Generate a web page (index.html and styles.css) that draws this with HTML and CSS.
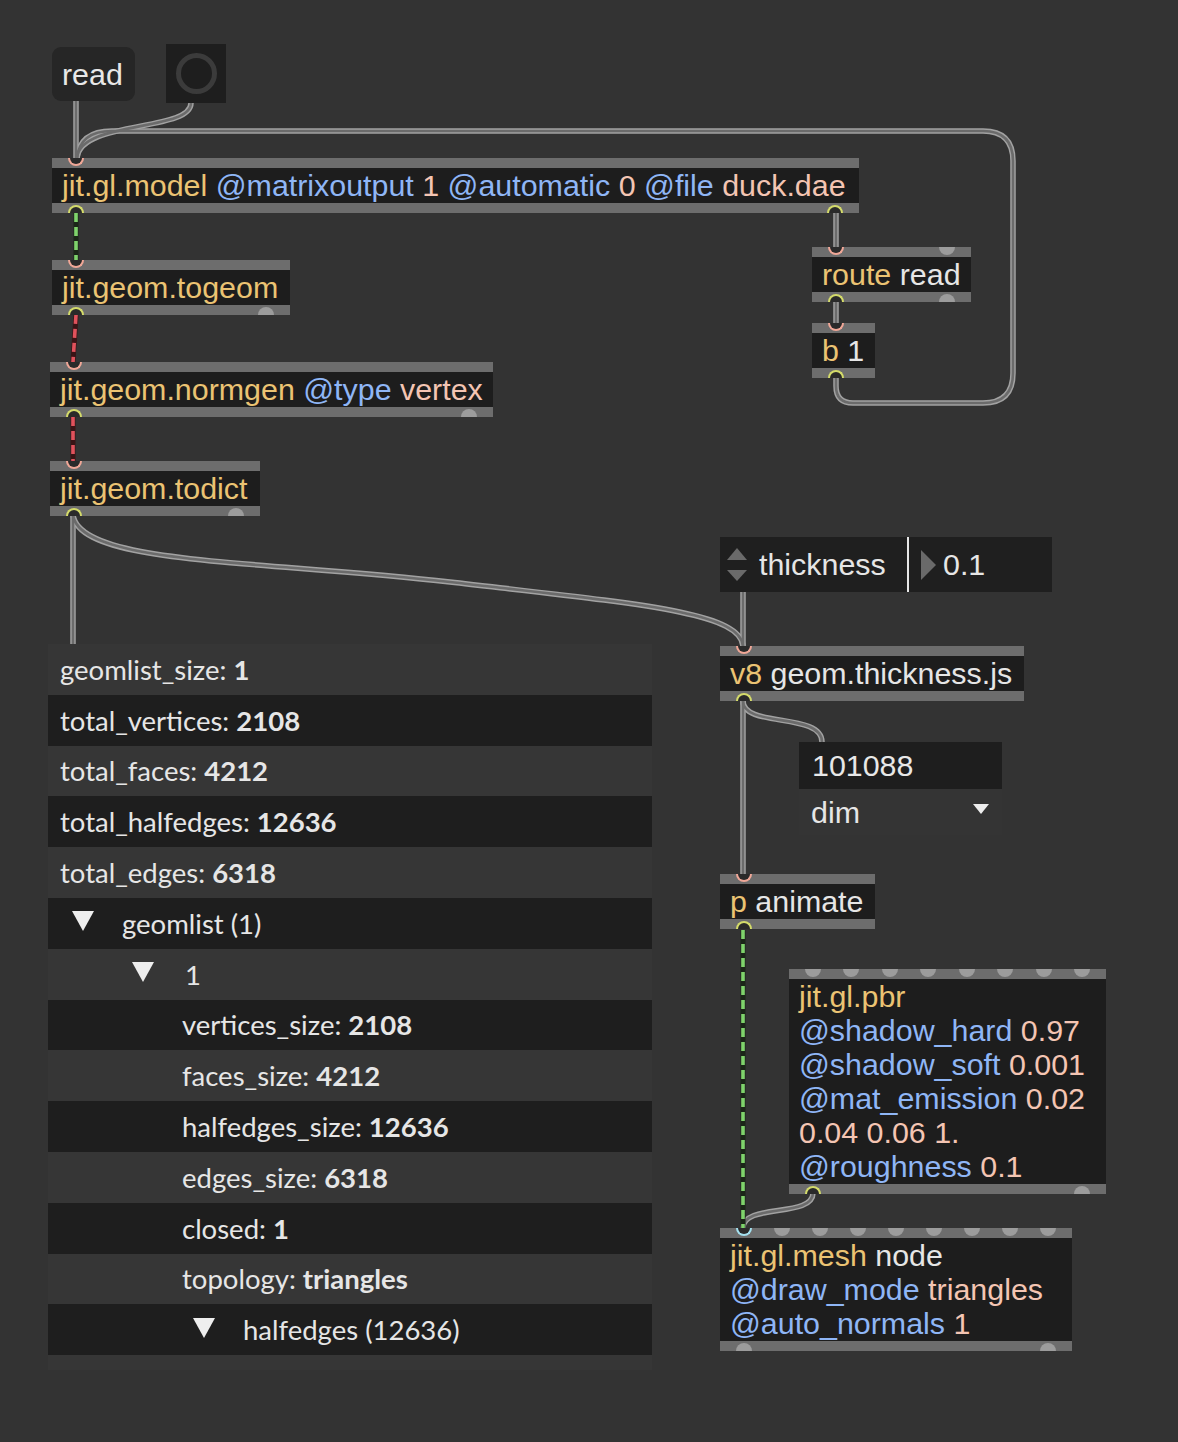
FILE: index.html
```html
<!DOCTYPE html>
<html>
<head>
<meta charset="utf-8">
<link rel="stylesheet" href="styles.css">
</head>
<body>
<div class="patcher">
  <svg class="cords" width="1178" height="1442" viewBox="0 0 1178 1442">
    <defs>
      <path id="c1" d="M76,101 L76,158"/>
      <path id="c2" d="M191,103 C191,132 80,120 77,158"/>
      <path id="c3" d="M836,378 L836,386 Q836,403 853,403 L983,403 Q1013,403 1013,373 L1013,161 Q1013,131 983,131 L112,131 Q80,131 77,158"/>
      <path id="c4" d="M836,213 L836,247"/>
      <path id="c5" d="M836,302 L836,323"/>
      <path id="c6" d="M73,515 L73,644"/>
      <path id="c7" d="M73,515 C80,565 260,560 450,582 C640,604 740,612 743,646"/>
      <path id="c8" d="M743,592 L743,646"/>
      <path id="c9" d="M743,701 C743,728 822,712 822,742"/>
      <path id="c10" d="M743,701 L743,874"/>
      <path id="c11" d="M813,1193 C813,1218 743,1203 743,1228"/>
      <path id="g1" d="M76,213 L76,260"/>
      <path id="g2" d="M743,930 L743,1228"/>
      <path id="r1" d="M76,315 L73,362"/>
      <path id="r2" d="M73,417 L73,461"/>
    </defs>
    <g class="cord-outer">
      <use href="#c1"/><use href="#c2"/><use href="#c3"/><use href="#c4"/><use href="#c5"/><use href="#c6"/>
      <use href="#c7"/><use href="#c8"/><use href="#c9"/><use href="#c10"/><use href="#c11"/>
    </g>
    <g class="cord-inner">
      <use href="#c1"/><use href="#c2"/><use href="#c3"/><use href="#c4"/><use href="#c5"/><use href="#c6"/>
      <use href="#c7"/><use href="#c8"/><use href="#c9"/><use href="#c10"/><use href="#c11"/>
    </g>
    <g class="green-under"><use href="#g1"/><use href="#g2"/></g>
    <g class="green-dash"><use href="#g1"/><use href="#g2"/></g>
    <g class="red-under"><use href="#r1"/><use href="#r2"/></g>
    <g class="red-dash"><use href="#r1"/><use href="#r2"/></g>
  </svg>

  <div class="node msg n-read">read</div>
  <div class="node bang n-bang"><div class="ring"></div></div>

  <div class="node obj n-model">
    <div class="bar top"><span class="port in"></span></div>
    <div class="body"><span class="cls">jit.gl.model</span> <span class="attr">@matrixoutput</span> <span class="val">1</span> <span class="attr">@automatic</span> <span class="val">0</span> <span class="attr">@file</span> <span class="val">duck.dae</span></div>
    <div class="bar bot"><span class="port out"></span><span class="port out"></span></div>
  </div>

  <div class="node obj n-togeom">
    <div class="bar top"><span class="port in"></span></div>
    <div class="body"><span class="cls">jit.geom.togeom</span></div>
    <div class="bar bot"><span class="port out"></span><span class="port bump"></span></div>
  </div>

  <div class="node obj n-normgen">
    <div class="bar top"><span class="port in"></span></div>
    <div class="body"><span class="cls">jit.geom.normgen</span> <span class="attr">@type</span> <span class="val">vertex</span></div>
    <div class="bar bot"><span class="port out"></span><span class="port bump"></span></div>
  </div>

  <div class="node obj n-todict">
    <div class="bar top"><span class="port in"></span></div>
    <div class="body"><span class="cls">jit.geom.todict</span></div>
    <div class="bar bot"><span class="port out"></span><span class="port bump"></span></div>
  </div>

  <div class="node obj n-route">
    <div class="bar top"><span class="port in"></span><span class="port bump"></span></div>
    <div class="body"><span class="cls">route</span> read</div>
    <div class="bar bot"><span class="port out"></span><span class="port bump"></span></div>
  </div>

  <div class="node obj n-b1">
    <div class="bar top"><span class="port in"></span></div>
    <div class="body"><span class="cls">b</span> 1</div>
    <div class="bar bot"><span class="port out"></span></div>
  </div>

  <div class="node attrui n-attr">
    <div class="arrows"><span class="up"></span><span class="down"></span></div>
    <div class="label">thickness</div>
    <div class="sep"></div>
    <span class="play"></span>
    <div class="value">0.1</div>
  </div>

  <div class="node obj n-v8">
    <div class="bar top"><span class="port in"></span></div>
    <div class="body"><span class="cls">v8</span> geom.thickness.js</div>
    <div class="bar bot"><span class="port out"></span></div>
  </div>

  <div class="node numbox n-num">101088</div>
  <div class="node umenu n-menu"><span>dim</span><span class="drop"></span></div>

  <div class="node obj n-anim">
    <div class="bar top"><span class="port in"></span></div>
    <div class="body"><span class="cls">p</span> animate</div>
    <div class="bar bot"><span class="port out"></span></div>
  </div>

  <div class="node obj n-pbr">
    <div class="bar top">
      <span class="port bump"></span><span class="port bump"></span><span class="port bump"></span><span class="port bump"></span>
      <span class="port bump"></span><span class="port bump"></span><span class="port bump"></span><span class="port bump"></span>
    </div>
    <div class="body multi">
      <div><span class="cls">jit.gl.pbr</span></div>
      <div><span class="attr">@shadow_hard</span> <span class="val">0.97</span></div>
      <div><span class="attr">@shadow_soft</span> <span class="val">0.001</span></div>
      <div><span class="attr">@mat_emission</span> <span class="val">0.02</span></div>
      <div><span class="val">0.04 0.06 1.</span></div>
      <div><span class="attr">@roughness</span> <span class="val">0.1</span></div>
    </div>
    <div class="bar bot"><span class="port out"></span><span class="port bump"></span></div>
  </div>

  <div class="node obj n-mesh">
    <div class="bar top">
      <span class="port in-blue"></span>
      <span class="port bump"></span><span class="port bump"></span><span class="port bump"></span><span class="port bump"></span>
      <span class="port bump"></span><span class="port bump"></span><span class="port bump"></span><span class="port bump"></span>
    </div>
    <div class="body multi">
      <div><span class="cls">jit.gl.mesh</span> node</div>
      <div><span class="attr">@draw_mode</span> <span class="val">triangles</span></div>
      <div><span class="attr">@auto_normals</span> <span class="val">1</span></div>
    </div>
    <div class="bar bot"><span class="port bump"></span><span class="port bump"></span></div>
  </div>

  <div class="node dict n-dict">
    <div class="row l0">geomlist_size:&nbsp;<b>1</b></div>
    <div class="row l0">total_vertices:&nbsp;<b>2108</b></div>
    <div class="row l0">total_faces:&nbsp;<b>4212</b></div>
    <div class="row l0">total_halfedges:&nbsp;<b>12636</b></div>
    <div class="row l0">total_edges:&nbsp;<b>6318</b></div>
    <div class="row t0"><span class="tri"></span>geomlist (1)</div>
    <div class="row t1"><span class="tri"></span>1</div>
    <div class="row l2">vertices_size:&nbsp;<b>2108</b></div>
    <div class="row l2">faces_size:&nbsp;<b>4212</b></div>
    <div class="row l2">halfedges_size:&nbsp;<b>12636</b></div>
    <div class="row l2">edges_size:&nbsp;<b>6318</b></div>
    <div class="row l2">closed:&nbsp;<b>1</b></div>
    <div class="row l2">topology:&nbsp;<b>triangles</b></div>
    <div class="row t2"><span class="tri"></span>halfedges (12636)</div>
  </div>
</div>
</body>
</html>
```

FILE: styles.css
```css
html, body {
  margin: 0;
  padding: 0;
  background: #333333;
}

.patcher {
  position: relative;
  width: 1178px;
  height: 1442px;
  overflow: hidden;
  background: #333333;
  font-family: "Liberation Sans", Arial, sans-serif;
  color: #e6e6e6;
}

.cords {
  position: absolute;
  left: 0;
  top: 0;
  z-index: 0;
}

.cords use { fill: none; }
.cord-outer use { stroke: #a2a2a2; stroke-width: 5.5; fill: none; }
.cord-inner use { stroke: #6b6b6b; stroke-width: 2.6; fill: none; }
.green-under use { stroke: #1b2618; stroke-width: 5; fill: none; }
.green-dash use { stroke: #7fd36c; stroke-width: 3.6; stroke-dasharray: 9 5; fill: none; }
.red-under use { stroke: #3a1416; stroke-width: 5; fill: none; }
.red-dash use { stroke: #e0525c; stroke-width: 3.6; stroke-dasharray: 9 5; fill: none; }

.node {
  position: absolute;
  z-index: 1;
  box-sizing: border-box;
}

/* objects */
.obj {
  display: flex;
  flex-direction: column;
}

.bar {
  height: 10px;
  background: #6d6d6d;
  display: flex;
  justify-content: space-between;
  padding: 0 16px;
}
.bar.top { align-items: flex-start; }
.bar.bot { align-items: flex-end; }

.port {
  width: 16px;
  height: 8px;
  box-sizing: border-box;
  flex: none;
}
.bar.top .port { border-radius: 0 0 8px 8px; }
.bar.bot .port { border-radius: 8px 8px 0 0; }
.port.bump { background: #9c9c9c; }
.port.in { border: 2px solid #f0a797; border-top: none; background: #2a2a2a; }
.port.in-blue { border: 2px solid #a4e1f0; border-top: none; background: #2a2a2a; }
.port.out { border: 2px solid #d4db6a; border-bottom: none; background: #2a2a2a; }

.body {
  background: #1d1d1d;
  height: 35px;
  padding: 0 10px;
  font-size: 30.4px;
  line-height: 35px;
  white-space: nowrap;
  color: #e6e6e6;
}
.body.multi {
  height: auto;
  line-height: 34px;
  padding-bottom: 1px;
}

.cls { color: #ebc373; }
.attr { color: #8fb6f6; }
.val { color: #f4c5b3; }

/* positions */
.n-read { left: 52px; top: 47px; width: 83px; height: 54px; }
.n-bang { left: 166px; top: 44px; width: 60px; height: 59px; }
.n-model { left: 52px; top: 158px; width: 807px; }
.n-togeom { left: 52px; top: 260px; width: 238px; }
.n-normgen { left: 50px; top: 362px; width: 443px; }
.n-todict { left: 50px; top: 461px; width: 210px; }
.n-route { left: 812px; top: 247px; width: 159px; }
.n-b1 { left: 812px; top: 323px; width: 63px; }
.n-attr { left: 720px; top: 537px; width: 332px; height: 55px; }
.n-v8 { left: 720px; top: 646px; width: 304px; }
.n-num { left: 799px; top: 742px; width: 203px; height: 47px; }
.n-menu { left: 799px; top: 789px; width: 203px; height: 46px; }
.n-anim { left: 720px; top: 874px; width: 155px; }
.n-pbr { left: 789px; top: 969px; width: 317px; }
.n-mesh { left: 720px; top: 1228px; width: 352px; }
.n-dict { left: 48px; top: 644px; width: 604px; height: 726px; }

/* message box */
.msg {
  background: #262626;
  border-radius: 9px;
  font-size: 30.4px;
  line-height: 54px;
  padding-left: 10px;
  color: #e8e8e8;
}

/* bang */
.bang {
  background: #1e1e1e;
  display: flex;
  align-items: center;
  justify-content: center;
}
.bang .ring {
  width: 41px;
  height: 41px;
  box-sizing: border-box;
  border: 5px solid #3b3b3b;
  border-radius: 50%;
}

/* attrui */
.attrui {
  background: #1f1f1f;
  display: flex;
  align-items: center;
  font-size: 30.4px;
}
.attrui .arrows {
  margin-left: 7px;
  width: 20px;
  display: flex;
  flex-direction: column;
  gap: 10px;
}
.attrui .up {
  width: 0; height: 0;
  border-left: 10px solid transparent;
  border-right: 10px solid transparent;
  border-bottom: 12px solid #6a6a6a;
}
.attrui .down {
  width: 0; height: 0;
  border-left: 10px solid transparent;
  border-right: 10px solid transparent;
  border-top: 11px solid #6a6a6a;
}
.attrui .label {
  margin-left: 12px;
  width: 148px;
  color: #e6e6e6;
}
.attrui .sep {
  width: 2px;
  align-self: stretch;
  background: #e6e6e6;
}
.attrui .play {
  margin-left: 12px;
  width: 0; height: 0;
  border-top: 15px solid transparent;
  border-bottom: 15px solid transparent;
  border-left: 15px solid #6a6a6a;
}
.attrui .value {
  margin-left: 7px;
  color: #e6e6e6;
}

/* number box */
.numbox {
  background: #1e1e1e;
  font-size: 30.4px;
  line-height: 47px;
  padding-left: 13px;
  color: #e8e8e8;
}

/* umenu */
.umenu {
  background: #343434;
  display: flex;
  align-items: center;
  justify-content: space-between;
  padding: 0 13px 0 12px;
  font-size: 30.4px;
  color: #e6e6e6;
}
.umenu .drop {
  width: 0; height: 0;
  border-left: 8px solid transparent;
  border-right: 8px solid transparent;
  border-top: 10px solid #eeeeee;
  margin-top: -6px;
}

/* dict view */
.dict {
  background: #363636;
  font-family: Lato, "Liberation Sans", sans-serif;
  font-size: 27.5px;
  color: #e6e6e6;
}
.dict .row {
  height: 50.8px;
  display: flex;
  align-items: center;
  white-space: nowrap;
  box-sizing: border-box;
}
.dict .row:nth-child(odd) { background: #363636; }
.dict .row:nth-child(even) { background: #1e1e1e; }
.dict .row b { font-weight: 700; }
.dict .l0 { padding-left: 12px; }
.dict .l2 { padding-left: 134px; }
.dict .t0 { padding-left: 24px; }
.dict .t1 { padding-left: 84px; }
.dict .t2 { padding-left: 145px; }
.dict .tri {
  width: 0; height: 0;
  border-left: 11.5px solid transparent;
  border-right: 11.5px solid transparent;
  border-top: 20px solid #eeeeee;
  margin-right: 28px;
  margin-top: -4px;
}
.dict .t1 .tri { margin-right: 31px; }
```
